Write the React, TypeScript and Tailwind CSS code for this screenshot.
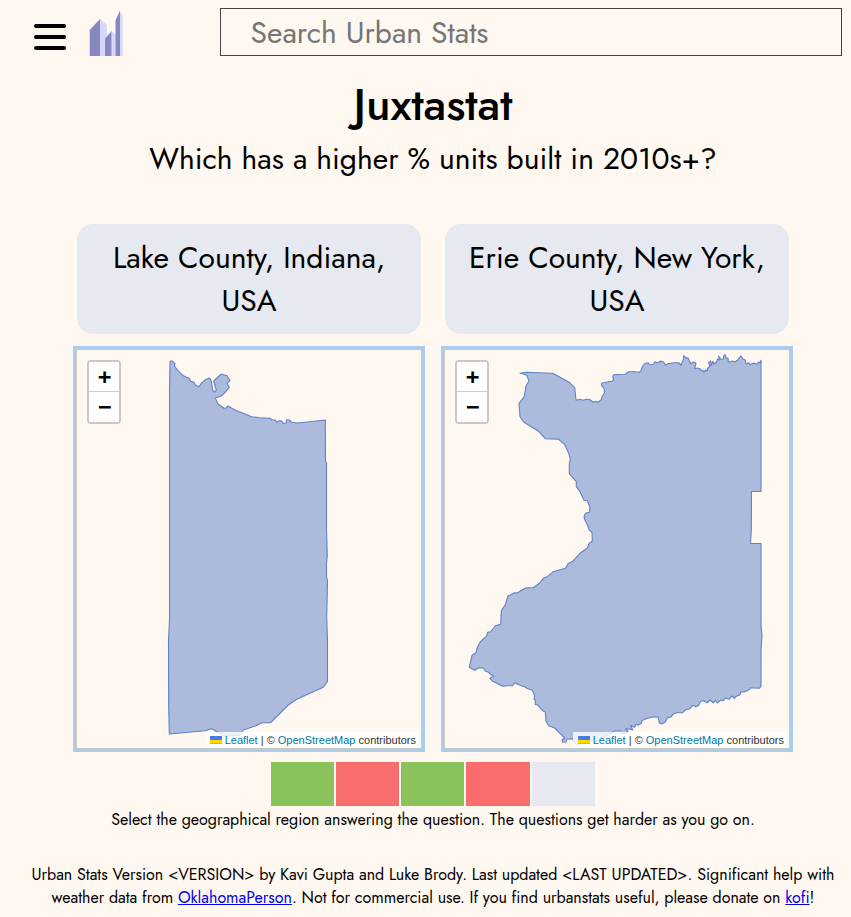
import type { ReactNode } from 'react';

type Point = [number, number];

const FONT = "font-['Jost','Lato','Liberation_Sans',sans-serif]";

/** Converts an outline recorded in thirds of a pixel around an origin to map pixels. */
function trace(ox: number, oy: number, flat: number[]): Point[] {
  const out: Point[] = [];
  for (let i = 0; i < flat.length; i += 2) {
    out.push([ox + flat[i] / 3, oy + flat[i + 1] / 3]);
  }
  return out;
}

const LAKE: Point[] = [
  ...trace(73, 0, [
    60, 34, 66, 33, 75, 41, 73, 48, 84, 62, 92, 70, 103, 79, 117, 84, 122, 94, 132, 97, 136, 105, 147, 110, 156, 98, 165, 90,
    177, 84, 182, 88, 189, 122, 193, 126, 199, 121, 191, 93, 214, 72, 231, 77, 240, 92, 231, 100, 238, 112, 225, 128, 213, 138,
    196, 145, 204, 162, 222, 175, 228, 174, 234, 168,
  ]),
  ...trace(-7, -135, [
    485, 580, 500, 587, 520, 595, 545, 605, 570, 608, 600, 610, 606, 614, 616, 615, 620, 622, 628, 617, 634, 617, 640, 625,
    648, 625, 650, 614, 658, 615, 664, 621, 680, 624, 720, 620, 766, 615,
  ]),
  [248.5, 111], [249.5, 113], [249.5, 180], [250.3, 206], [249.5, 213], [249.5, 226], [250.5, 231], [249.7, 268], [250.5, 290],
  [250.5, 331.5],
  ...trace(73, 310, [
    520, 82, 440, 118, 415, 135, 362, 188, 335, 188, 318, 197, 280, 210, 268, 226, 225, 229, 185, 206, 165, 212,
    58, 222, 56, 140,
  ]),
  [91.5, 290], [92.5, 270], [92.5, 40],
];

const ERIE: Point[] = [
  ...trace(-5, -10, [
    240, 100, 258, 97, 338, 100, 388, 127, 404, 143, 408, 181, 421, 178, 428, 181, 440, 178, 450, 179, 460, 187, 466, 184,
    474, 187, 484, 179, 487, 169, 493, 160, 493, 147, 485, 137, 485, 130, 498, 127, 516, 124, 521, 118, 518, 110, 521, 104,
    556, 103, 567, 95,
  ]),
  ...trace(155, -10, [
    104, 95, 118, 97, 124, 90, 128, 78, 134, 71, 144, 68, 150, 75, 160, 73, 165, 65, 172, 69, 182, 63, 190, 65, 197, 76,
    203, 71, 222, 68, 236, 68, 243, 75, 247, 66, 250, 60, 251, 47, 258, 54, 264, 53, 268, 62, 272, 71, 280, 66, 288, 70,
    284, 86, 292, 84, 300, 86, 304, 92, 308, 90, 312, 97, 316, 90, 322, 92, 324, 83, 330, 79, 326, 68, 332, 63, 334, 76,
    339, 64, 341, 72, 350, 66, 352, 57, 358, 60, 356, 48, 362, 58, 370, 57, 372, 46, 376, 44, 378, 54, 384, 54, 385, 67,
    398, 63, 404, 66, 414, 60, 418, 53, 423, 48, 430, 58, 436, 60, 438, 72, 446, 68, 450, 74, 460, 69, 470, 73, 476, 66,
    480, 69, 483, 61,
  ]),
  [316, 141.5], [306.5, 141.5], [306.3, 180], [305.5, 193.5], [316, 193.5], [316, 275], [317, 285], [316, 300],
  ...trace(15, 300, [
    903, 109, 898, 115, 872, 113, 866, 120, 852, 126, 842, 126, 840, 134, 826, 140, 824, 146, 816, 138, 808, 148, 796, 144,
    790, 152, 782, 150, 772, 159, 766, 151, 760, 158, 750, 150, 742, 158, 730, 152, 722, 154, 716, 166, 708, 170, 698, 166,
    690, 176, 676, 180, 668, 188, 650, 188, 640, 192, 634, 200, 622, 204, 616, 216, 604, 222, 598, 218, 594, 200, 578, 201,
    556, 207, 546, 212, 544, 220, 534, 226, 528, 222, 524, 232, 512, 226, 518, 240, 508, 236, 496, 237, 504, 242, 498, 250,
    486, 250, 478, 242, 462, 243, 448, 254, 430, 262, 418, 270, 406, 276, 392, 270, 370, 276, 350, 284, 344, 278, 338, 266,
    326, 268, 320, 268, 318, 276, 308, 277, 306, 270, 314, 264, 308, 258, 300, 250, 284, 234, 266, 227, 258, 213, 256, 186,
    248, 182, 240, 173, 232, 164, 226, 164, 226, 150, 222, 148, 224, 136, 216, 120, 200, 115, 196, 111, 184, 107, 164, 98,
    158, 107, 142, 107, 128, 109, 116, 103, 98, 94, 90, 85, 102, 78, 92, 74, 84, 66, 76, 63, 70, 54, 56, 53, 44, 61,
  ]),
  ...trace(15, 140, [
    28, 532, 36, 496, 48, 488, 52, 472, 62, 454, 78, 440, 84, 426, 92, 426, 106, 407, 122, 403, 124, 362, 136, 344, 144, 318,
    164, 308, 172, 309, 186, 300, 198, 293, 220, 293, 240, 278, 252, 263, 262, 260, 280, 245, 316, 235, 324, 221, 338, 214,
    362, 188, 382, 174, 388, 160, 397, 153, 396, 127, 388, 120, 382, 104, 373, 86, 373, 76, 378, 69, 388, 67, 390, 52,
    382, 32, 372, 31,
  ]),
  ...trace(-5, -10, [
    420, 455, 409, 440, 409, 425, 388, 401, 388, 372, 391, 357, 386, 340, 374, 314, 356, 298, 316, 296,
    296, 274, 252, 247, 240, 230, 237, 190, 253, 170, 258, 138, 267, 122, 260, 106, 248, 101,
  ]),
];

const RESULTS = [
  'w-[63px] bg-[#8ac35c]',
  'w-[63px] bg-[#fa6d6d]',
  'w-[63px] bg-[#8ac35c]',
  'w-[64px] bg-[#fa6d6d]',
  'w-[63px] bg-[#e6e9f0]',
];

function Logo() {
  return (
    <svg className="mt-[2px] ml-[23px] h-[46px] w-[34px] self-start" viewBox="89 10 34 46">
      <path fill="#8888c0" d="M89.7 56V30L100 19v37z" />
      <path fill="#d8d8fc" d="M100 19l7 5.500v31.500h-7z" />
      <path fill="#8888c0" d="M105 56V38.500l6.700-7.500V56z" />
      <path fill="#d8d8fc" d="M111.700 31l4 4v21h-4z" />
      <path fill="#8888c0" d="M115.500 56V20.500l4.500-10V56z" />
      <path fill="#d8d8fc" d="M120 10.500l2.700 6V56H120z" />
    </svg>
  );
}

function Header() {
  return (
    <header className="flex h-12 items-center">
      <button className="mt-[10px] ml-[26px] flex w-8 flex-col gap-[7px] self-start pt-[6px]" aria-label="Menu">
        <span className="h-1 rounded-full bg-black" />
        <span className="h-1 rounded-full bg-black" />
        <span className="h-1 rounded-full bg-black" />
      </button>
      <Logo />
      <input
        className="ml-[97px] h-12 w-[622px] border border-[#444] px-[29.5px] text-[30px] placeholder:text-[#757575] placeholder:opacity-100"
        placeholder="Search Urban Stats"
      />
    </header>
  );
}

function RegionMap({ outline }: { outline: Point[] }) {
  return (
    <div className="relative h-[406px] w-[352px] border-[3px] border-[#aaccee]">
      <div className="h-full w-full border border-[#ccc9c0]">
        <svg className="block h-[398px] w-[344px]" viewBox="0 0 344 398">
          <polygon
            points={outline.map((p) => p.map((n) => n.toFixed(1)).join(',')).join(' ')}
            fill="#acbadb"
            stroke="#5f82c8"
            strokeWidth="1.1"
            strokeLinejoin="round"
          />
        </svg>
      </div>
      <div className="absolute top-[11px] left-[11px] w-[34px] rounded-[4px] border-2 border-black/20 bg-clip-padding text-center indent-px font-['DejaVu_Sans_Mono',monospace] text-[22px] leading-[30px] font-bold text-black">
        <div className="h-[30px] rounded-t-[2px] border-b border-[#ccc] bg-white">+</div>
        <div className="h-[30px] rounded-b-[2px] bg-white">−</div>
      </div>
      <div className="absolute right-[1px] bottom-[1px] flex h-4 items-center bg-white/80 px-[5px] font-['Liberation_Sans',Arial,sans-serif] text-[11px] leading-4 whitespace-pre text-[#333]">
        <svg className="mr-[3px] h-2 w-3" viewBox="0 0 12 8">
          <path fill="#4c7be1" d="M0 0h12v4H0z" />
          <path fill="#ffd500" d="M0 4h12v3H0z" />
          <path fill="#e0bc00" d="M0 7h12v1H0z" />
        </svg>
        <a className="text-[#0078a8]">Leaflet</a>
        {' | © '}
        <a className="text-[#0078a8]">OpenStreetMap</a>
        {' contributors'}
      </div>
    </div>
  );
}

function Choice({ name, outline }: { name: ReactNode; outline: Point[] }) {
  return (
    <div className="flex w-[352px] flex-col items-center gap-3">
      <button className="h-[110px] w-[344px] rounded-[16px] bg-[#e6e9f0] text-[30px] leading-[43px] whitespace-nowrap">
        {name}
      </button>
      <RegionMap outline={outline} />
    </div>
  );
}

export default function App() {
  return (
    <div className={`h-[917px] w-[851px] overflow-hidden bg-[#fff8f0] pt-2 pl-2 text-black ${FONT}`}>
      <Header />
      <main className="flex w-[850px] flex-col items-center">
        <h1 className="mt-[14px] h-[67px] text-[45px] leading-[69px] font-medium whitespace-nowrap">Juxtastat</h1>
        <h2 className="h-[43px] text-[30px] leading-[43px] whitespace-nowrap">Which has a higher % units built in 2010s+?</h2>
        <div className="mt-[44px] flex gap-4">
          <Choice name={<>Lake County, Indiana,<br />USA</>} outline={LAKE} />
          <Choice name={<>Erie County, New York,<br />USA</>} outline={ERIE} />
        </div>
        <div className="mt-[10px] flex h-11 gap-[2px]">
          {RESULTS.map((look, i) => (
            <div key={i} className={look} />
          ))}
        </div>
        <p className="mt-[2px] h-[23px] text-[16px] leading-[23px] whitespace-nowrap">
          Select the geographical region answering the question. The questions get harder as you go on.
        </p>
      </main>
      <footer className="mt-8 flex w-[850px] flex-col items-center text-[16px] leading-[23px] whitespace-nowrap">
        <p>
          {'Urban Stats Version <VERSION> by Kavi Gupta and Luke Brody. Last updated <LAST UPDATED>. Significant help with'}
        </p>
        <p>
          weather data from <a className="text-[#0000ee] underline">OklahomaPerson</a>. Not for commercial use. If you find
          urbanstats useful, please donate on <a className="text-[#0000ee] underline">kofi</a>!
        </p>
      </footer>
    </div>
  );
}
